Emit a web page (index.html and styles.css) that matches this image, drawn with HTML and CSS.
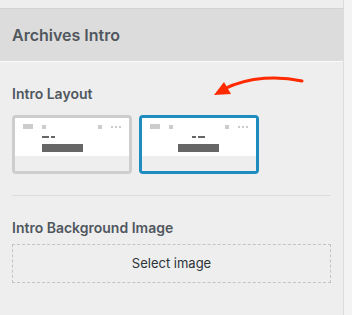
FILE: index.html
```html
<!DOCTYPE html>
<html>
    <head>
        <meta charset="utf-8"/>
        <title>Archives Intro</title>
        <link rel="stylesheet" href="styles.css">
    </head>
    <body>
        <div class="panel">
            <div class="top"></div>
            <div class="head">Archives Intro</div>
            <div class="body">
                <div class="label">Intro Layout</div>
                <div class="layouts">
                    <div class="card">
                        <svg class="thumb" width="114" height="53" viewBox="0 0 114 53">
                            <rect x="0" y="0" width="114" height="38" fill="#fff"/>
                            <rect x="0" y="38" width="114" height="15" fill="#eee"/>
                            <rect x="8" y="6" width="10" height="5" fill="#ccc"/>
                            <rect x="27" y="7" width="4" height="4" fill="#ccc"/>
                            <rect x="83" y="7" width="4" height="4" fill="#ccc"/>
                            <rect x="96" y="8" width="2" height="2" fill="#ccc"/>
                            <rect x="100" y="8" width="2" height="2" fill="#ccc"/>
                            <rect x="104" y="8" width="2" height="2" fill="#ccc"/>
                            <rect x="27" y="18" width="7" height="2" fill="#666"/>
                            <rect x="36" y="18" width="4" height="2" fill="#666"/>
                            <rect x="27" y="26" width="41" height="8" fill="#666"/>
                        </svg>
                    </div>
                    <div class="card active">
                        <svg class="thumb" width="114" height="53" viewBox="0 0 114 53">
                            <rect x="0" y="0" width="114" height="38" fill="#fff"/>
                            <rect x="0" y="38" width="114" height="15" fill="#eee"/>
                            <rect x="8" y="6" width="10" height="5" fill="#ccc"/>
                            <rect x="27" y="7" width="4" height="4" fill="#ccc"/>
                            <rect x="83" y="7" width="4" height="4" fill="#ccc"/>
                            <rect x="96" y="8" width="2" height="2" fill="#ccc"/>
                            <rect x="100" y="8" width="2" height="2" fill="#ccc"/>
                            <rect x="104" y="8" width="2" height="2" fill="#ccc"/>
                            <rect x="50" y="18" width="4" height="2" fill="#666"/>
                            <rect x="56" y="18" width="7" height="2" fill="#666"/>
                            <rect x="36" y="26" width="41" height="8" fill="#666"/>
                        </svg>
                    </div>
                </div>
                <div class="line"></div>
                <div class="label">Intro Background Image</div>
                <div class="select">Select image</div>
            </div>
            <svg class="arrow" width="110" height="30" viewBox="200 70 110 30">
                <path d="M302 81 C 280 76, 250 76, 224 89" fill="none" stroke="#ff2a00" stroke-width="3" stroke-linecap="round"/>
                <polygon points="214,95 224,82 231,94" fill="#ff2a00"/>
            </svg>
        </div>
    </body>
</html>
```
FILE: styles.css
```css
body{margin:0;padding:0;background-color:#f3f3f3;font-family:Inter,'Liberation Sans',sans-serif;color:#50575e;}
.panel{position:relative;width:343px;height:315px;background-color:#eee;border-right:1px solid #dcdcdc;}
.top{height:8px;}
.head{height:52px;line-height:52px;padding-left:12px;background-color:#dcdcdc;border-top:1px solid #d2d2d2;border-bottom:1px solid #fafafa;font-size:16px;font-weight:600;}
.body{padding:0 12px;}
.label{font-size:14px;font-weight:600;line-height:18px;}
.body > .label:first-child{padding-top:23px;}
.layouts{display:flex;gap:7px;margin-top:12px;}
.card{width:114px;height:53px;border:3px solid #cdcdcd;border-radius:4px;overflow:hidden;}
.card.active{border-color:#1e8cbe;}
.thumb{display:block;}
.line{height:1px;background-color:#ddd;margin:21px 0 23px;}
.select{margin-top:7px;height:37px;line-height:37px;border:1px dashed #c3c4c7;text-align:center;font-size:13px;color:#2c3338;}
.arrow{position:absolute;left:200px;top:70px;}
```
